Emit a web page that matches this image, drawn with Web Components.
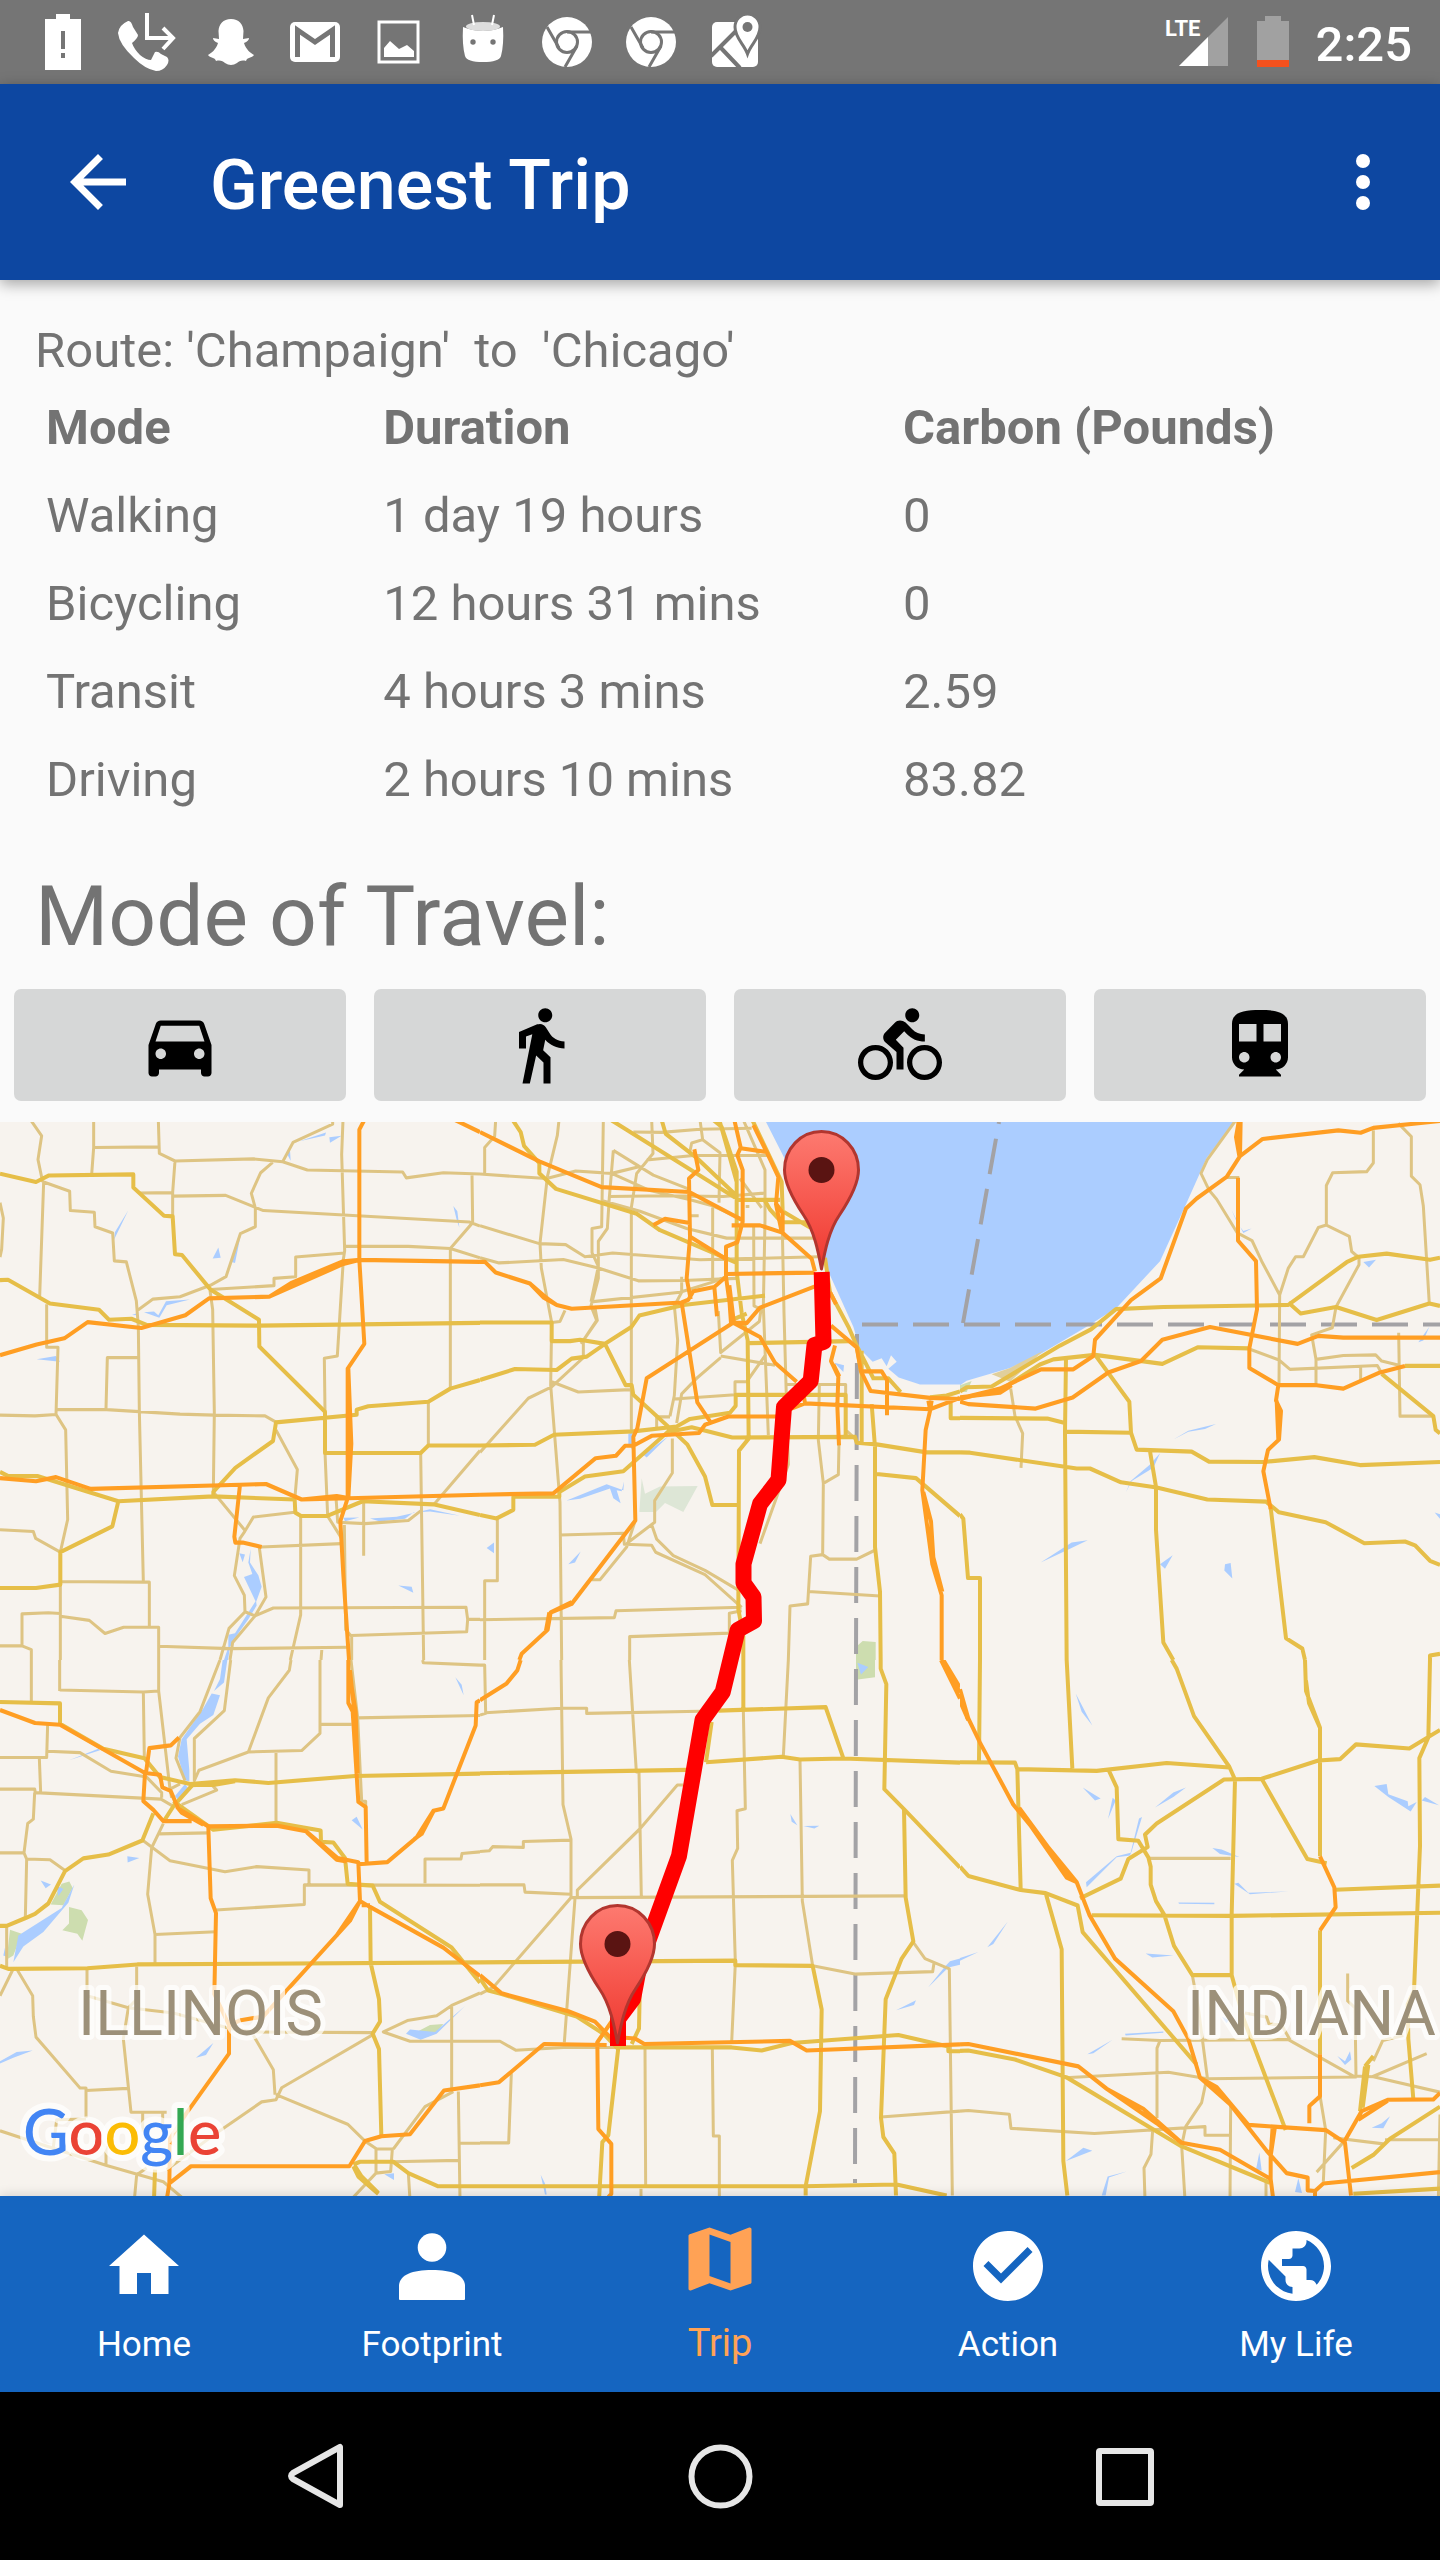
<!DOCTYPE html>
<html lang="en">
<head>
<meta charset="utf-8">
<meta name="viewport" content="width=device-width, initial-scale=1">
<title>Greenest Trip</title>
<style>
  html { background: #000; }
  body { margin: 0; font-family: Roboto, "Noto Sans", sans-serif; background: #fafafa; color: #737373; }
</style>
</head>
<body>
<trip-screen></trip-screen>

<script>
const define = (name, html, setup) => {
  const template = document.createElement('template');
  template.innerHTML = html;
  customElements.define(name, class extends HTMLElement {
    constructor() {
      super();
      this.attachShadow({ mode: 'open' }).append(template.content.cloneNode(true));
      if (setup) setup(this.shadowRoot, this);
    }
  });
};

/* ---------- status bar ---------- */
define('status-bar', `
<style>
  :host { display: flex; align-items: center; justify-content: space-between; height: 84px; background: #757575; color: #fff; }
  .left { display: flex; padding-left: 21px; }
  .right { display: flex; align-items: center; padding-right: 28px; }
  svg { display: block; width: 84px; height: 84px; fill: #fff; }
  .lte { width: 76px; font-weight: 700; font-size: 22px; }
  .batt { width: 80px; }
  .k { fill: #757575; }
  .s { fill: none; stroke: #757575; stroke-width: 3; }
  .w { fill: none; stroke: #fff; stroke-width: 4; }
  time { font-size: 49px; line-height: 58px; font-weight: 500; padding-top: 5px; }
</style>
<div class="left">
  <svg viewBox="0 0 84 84"><path d="M24 19H35V14H49V19H60V70H24Z"/><path class="k" d="M40 31h4v18h-4zM40 53h4v5h-4z"/></svg>
  <svg viewBox="0 0 84 84"><path d="M23 21Q26 20 28 27L33 35Q33 38 27 43Q29 49 35 55Q41 60 46 60L50 52Q53 51 56 54L62 57Q65 60 62 65Q58 71 51 71Q40 69 29 58Q14 44 13 33Q14 25 23 21Z"/><path class="w" d="M42 13V38H68M58 28L68 38L58 49"/></svg>
  <svg viewBox="0 0 84 84"><path d="M42 19C50 19 54 24 54.500 31L54 39L60 38Q60 41 55 43C57 50 62 53 65 55C63 58 58 57 57 61C53 60 50 61 48 63Q42 67 36 63C34 61 31 60 27 61C26 57 21 58 19 55C22 53 27 50 29 43Q24 41 24 38L30 39L29.500 31C30 24 34 19 42 19Z"/></svg>
  <svg viewBox="0 0 84 84"><rect x="17" y="22" width="50" height="40" rx="5"/><path class="s" style="stroke-width:5" d="M24.500 57V30L42 42L59.500 30V57"/></svg>
  <svg viewBox="0 0 84 84"><rect class="w" style="stroke-width:3" x="22" y="22" width="39" height="40"/><path d="M27 57V48L33 41L42 49L50 45L57 51V57Z"/></svg>
  <svg viewBox="0 0 84 84"><path d="M22 27Q42 35 62 27Q63 45 60 56Q58 62 42 62Q26 62 24 56Q21 45 22 27Z"/><ellipse cx="42" cy="26.500" rx="17" ry="4.500" fill="#ddd"/><path class="w" style="stroke-width:2" d="M31 15L33 25M53 15L51 25"/><circle class="k" cx="32" cy="42" r="2.700"/><circle class="k" cx="52" cy="42" r="2.700"/></svg>
  <svg viewBox="0 0 84 84"><circle cx="42" cy="42" r="25"/><path class="s" d="M42 32H67M22 27L34 48M52 46L40 67"/><circle class="s" cx="42" cy="42" r="10.500"/></svg>
  <svg viewBox="0 0 84 84"><circle cx="42" cy="42" r="25"/><path class="s" d="M42 32H67M22 27L34 48M52 46L40 67"/><circle class="s" cx="42" cy="42" r="10.500"/></svg>
  <svg viewBox="0 0 84 84"><rect x="19" y="22" width="46" height="45" rx="5"/><path class="s" style="stroke-width:4" d="M18 56L44 30M28 48L47 68"/><path d="M54.500 54C51 44 42 38 42 27A12.500 13 0 0 1 67 27C67 38 58 44 54.500 54Z" stroke="#757575" stroke-width="3"/><circle class="k" cx="54.500" cy="27" r="5"/></svg>
</div>
<div class="right">
  <svg class="lte" viewBox="0 0 76 84"><path d="M19 66L68 17V66Z" opacity=".32"/><path d="M19 66L48 37V66Z"/><text x="5" y="36">LTE</text></svg>
  <svg class="batt" viewBox="0 0 80 84"><path d="M21 21H29V16H45V21H53V67H21Z" opacity=".32"/><path d="M21 60H53V67H21Z" fill="#f4511e"/></svg>
  <time>2:25</time>
</div>`);

/* ---------- app bar ---------- */
define('app-bar', `
<style>
  :host { display: flex; align-items: center; height: 196px; padding: 0 35px 0 56px; background: #0d47a1; color: #fff; box-shadow: 0 4px 14px rgba(0,0,0,.35); position: relative; z-index: 1; }
  button { border: 0; padding: 0; background: none; color: inherit; display: block; }
  svg { display: block; width: 84px; height: 84px; fill: currentColor; }
  h1 { flex: 1; margin: 0; padding: 6px 0 0 70px; font-size: 70px; line-height: 82px; font-weight: 500; }
</style>
<button aria-label="Back"><svg viewBox="0 0 24 24"><path d="M20 11H7.830l5.590-5.590L12 4l-8 8 8 8 1.410-1.410L7.830 13H20v-2z"/></svg></button>
<h1><slot></slot></h1>
<button aria-label="More options"><svg viewBox="0 0 24 24"><circle cx="12" cy="6" r="2"/><circle cx="12" cy="12" r="2"/><circle cx="12" cy="18" r="2"/></svg></button>`);

/* ---------- route comparison ---------- */
define('route-summary', `
<style>
  :host { display: block; padding: 38px 0 0 35px; font-size: 49px; line-height: 66px; }
  p { margin: 0; white-space: pre; }
  table { width: 100%; table-layout: fixed; border-collapse: collapse; }
  th, td { box-sizing: border-box; padding: 11px 0 11px 11px; text-align: left; }
  th { font-weight: 700; }
  th:nth-child(1) { width: 24%; }
  th:nth-child(2) { width: 37%; }
</style>
<p><slot></slot></p>
<table>
  <thead><tr><th>Mode</th><th>Duration</th><th>Carbon (Pounds)</th></tr></thead>
  <tbody></tbody>
</table>`, root => {
  const rows = [
    ['Walking', '1 day 19 hours', '0'],
    ['Bicycling', '12 hours 31 mins', '0'],
    ['Transit', '4 hours 3 mins', '2.59'],
    ['Driving', '2 hours 10 mins', '83.82'],
  ];
  root.querySelector('tbody').innerHTML = rows
    .map(r => '<tr>' + r.map(c => `<td>${c}</td>`).join('') + '</tr>').join('');
});

/* ---------- travel mode buttons ---------- */
define('travel-modes', `
<style>
  :host { display: block; padding: 37px 14px 21px; }
  h2 { margin: 0 0 16px; padding-left: 21px; font-size: 84px; line-height: 112px; font-weight: 400; }
  div { display: grid; grid-template-columns: repeat(4, 1fr); gap: 28px; }
  button { border: 0; padding: 14px 0; border-radius: 7px; background: #d6d7d7; color: #000; }
  svg { display: block; width: 84px; height: 84px; margin: 0 auto; fill: currentColor; }
</style>
<h2><slot></slot></h2>
<div>
  <button aria-label="Driving"><svg viewBox="0 0 24 24"><path d="M18.920 6.010C18.720 5.420 18.160 5 17.500 5h-11c-.66 0-1.210.42-1.420 1.010L3 12v8c0 .55.45 1 1 1h1c.55 0 1-.45 1-1v-1h12v1c0 .55.45 1 1 1h1c.55 0 1-.45 1-1v-8l-2.080-5.990zM6.500 16c-.83 0-1.500-.67-1.500-1.500S5.670 13 6.500 13s1.500.67 1.500 1.500S7.330 16 6.500 16zm11 0c-.83 0-1.500-.67-1.500-1.500s.67-1.500 1.500-1.500 1.500.67 1.500 1.500-.67 1.500-1.500 1.500zM5 11l1.500-4.500h11L19 11H5z"/></svg></button>
  <button aria-label="Walking"><svg viewBox="0 0 24 24"><path d="M13.500 5.500c1.100 0 2-.9 2-2s-.9-2-2-2-2 .9-2 2 .9 2 2 2zM9.800 8.900L7 23h2.100l1.800-8 2.100 2v6h2v-7.500l-2.100-2 .6-3C14.800 12 16.800 13 19 13v-2c-1.900 0-3.500-1-4.300-2.400l-1-1.600c-.4-.6-1-1-1.700-1-.3 0-.5.1-.8.1L6 8.300V13h2V9.600l1.800-.7"/></svg></button>
  <button aria-label="Bicycling"><svg viewBox="0 0 24 24"><path d="M15.500 5.500c1.100 0 2-.9 2-2s-.9-2-2-2-2 .9-2 2 .9 2 2 2zM5 12c-2.800 0-5 2.200-5 5s2.200 5 5 5 5-2.200 5-5-2.200-5-5-5zm0 8.500c-1.900 0-3.500-1.600-3.500-3.500s1.600-3.500 3.500-3.500 3.500 1.600 3.500 3.500-1.600 3.500-3.500 3.500zm5.800-10l2.400-2.400.8.8c1.300 1.300 3 2.100 5.100 2.100V9c-1.500 0-2.700-.6-3.600-1.500l-1.900-1.900c-.5-.4-1-.6-1.600-.6s-1.100.2-1.400.6L7.800 8.400c-.4.4-.6.9-.6 1.400 0 .6.2 1.100.6 1.400L11 14v5h2v-6.200l-2.200-2.300zM19 12c-2.800 0-5 2.200-5 5s2.200 5 5 5 5-2.200 5-5-2.200-5-5-5zm0 8.500c-1.900 0-3.500-1.600-3.500-3.500s1.600-3.500 3.500-3.500 3.500 1.600 3.500 3.500-1.600 3.500-3.500 3.500z"/></svg></button>
  <button aria-label="Transit"><svg viewBox="0 0 24 24"><path d="M12 2c-4.420 0-8 .5-8 4v9.500C4 17.430 5.570 19 7.500 19L6 20.500v.5h12v-.5L16.500 19c1.930 0 3.500-1.570 3.500-3.500V6c0-3.500-3.580-4-8-4zM7.500 17c-.83 0-1.500-.67-1.500-1.500S6.670 14 7.500 14s1.500.67 1.500 1.500S8.330 17 7.500 17zm3.500-6H6V6h5v5zm5.500 6c-.83 0-1.500-.67-1.500-1.500s.67-1.500 1.500-1.500 1.500.67 1.500 1.500-.67 1.500-1.500 1.500zm1.500-6h-5V6h5v5z"/></svg></button>
</div>`);

/* ---------- map: six tiles, each 480x540 map units, on a 1440x1568 grid ---------- */
const tiles = [
{ x: 0, y: -2,
  water: 'M898 62L978 36L975 45ZM988 50L1025 46L990 66ZM862 100L870 88L872 118ZM385 262L342 348L345 325ZM638 402L655 370L662 400ZM722 335L695 412L705 415ZM1360 250L1372 265L1378 312L1370 290ZM432 558L462 556L475 567L498 526L570 521L500 538L478 574ZM396 566L415 560L412 567ZM110 695L168 685L180 702ZM1030 1155L1078 1154L1035 1165ZM1110 1157L1190 1152L1290 1130L1380 1149L1290 1137L1240 1140L1215 1158L1140 1166ZM718 1258L735 1262L728 1284ZM732 1327L757 1318L745 1285L752 1245L750 1285L775 1322L785 1355L768 1400ZM768 1395L770 1410L745 1450L715 1490L690 1530L684 1568H672L685 1530V1495L705 1490ZM1195 1352L1235 1355L1240 1373Z',
  minor: 'M92 0L125 46L114 115L128 180M281 0V80L275 158M281 80L475 78M475 0L478 97L525 119L760 113L848 121L922 145L1208 151L1219 168L1330 153L1440 157M525 119L518 210V280M418 212L518 211M518 221L677 219L790 263L1408 296L1440 308M818 123L782 153L754 213L766 256V310L721 330L678 455L631 480L540 513L459 520L412 553M848 121L879 65L998 12V0M1029 0L1025 100L1034 380L1030 405L1012 685L973 692L975 845M131 180L209 207L211 263L283 268L285 310L338 328L343 409L379 412L409 525L415 600L418 845L430 1340M131 180L119 512M0 240L10 285L5 375L0 398M140 535V660H174L168 855L197 900L203 1160L181 1255M631 492L822 481V460L887 455V398L1034 386M1034 367H1225L1351 373L1440 400M1416 158L1418 298L1351 373V780M630 495L638 550L643 850L640 1080M318 838L322 690H413M168 841H320L540 854L643 857L795 859L828 877M0 857L105 859L168 855M828 900L892 1015L884 1105M640 1080L735 1192M884 1139L760 1153L734 1195L720 1215L703 1323L733 1380L735 1428M975 965L983 1150L1028 1220M1008 1095L1013 1168L1095 1172L1225 1163L1262 1135M1091 1110V1265M902 1150V1437L871 1568M783 1240L1025 1230M778 1242L798 1385L765 1440M735 1428L687 1476L660 1568M735 1428L765 1440L698 1517L690 1568M765 1440L820 1417L1398 1415L1403 1450H1440M1403 1450L1400 1486L1053 1497M1262 965L1271 1568M1285 820V945M1440 960L1303 1115M477 1528L690 1535L1045 1531M966 1531L963 1568M0 1190L100 1195L107 1215L181 1255M181 1340L430 1342H448V1472M181 1255V1568M181 1441L268 1453L315 1491L371 1473H476V1568M181 1433L145 1431L66 1434V1527M0 1527H66L94 1538V1568M1033 1170L1037 1480L1055 1500V1568',
  major: 'M0 156L108 180L147 161L400 158V196L492 278L518 280L525 390L546 392L631 492L777 580L778 658L975 847V967H1262L1285 945H1440M0 465L24 464L150 533L297 551L327 580L394 577L440 595L775 597L1440 589M1440 755L1351 780L1285 818L1105 831L1070 841V856L828 878L819 932L706 1010L640 1080V1093M0 1022L25 1034H112L355 1107L640 1093L884 1102L886 1140L903 1150H980L1088 1107L1300 1116L1440 1147M355 1107L337 1180L181 1255V1349L108 1359H0',
  highway: 'M0 683L110 652L193 634L263 587L424 604L556 567L627 518L808 513L1030 418L1080 406L1440 412M808 513L876 472L1030 410L1080 406M1093 0L1078 28V406L1093 650L1043 722V1098L1021 1165L1030 1320L1047 1568M1045 722L1054 940L1045 1098M0 1040L108 1049L168 1037L272 1071L720 1059L798 1057L905 1102L1440 1088M905 1102L1010 1092L1045 1098M720 1059L703 1210L706 1227H728L785 1240M1365 0L1440 35' },
{ x: 480, y: -2,
  water: 'M855 0L905 95L960 200L1010 350L1045 440L1120 600L1140 665L1178 702L1205 692L1220 715L1233 683L1250 702L1225 722L1256 748L1320 768H1440V0ZM260 1105L380 1058L430 1075L432 1050L425 1078L410 1075L422 1113L400 1098L390 1070L300 1100ZM445 912L458 905V960L445 940ZM490 972L565 918L500 980ZM20 1243L42 1227V1258ZM265 1290L302 1253L285 1285ZM1063 705L1092 712L1090 732Z',
  park: 'M1128 1530L1148 1513L1187 1516V1568H1128Z',
  pale: 'M485 1040L495 1085L540 1064L653 1063L610 1138L555 1112L528 1138H478Z',
  minor: 'M47 0L44 47L14 80V155M237 0L232 45L202 165L180 358L184 430L215 588L212 770L240 1110L245 1568M370 0L365 310L336 315V385L355 425L333 528M0 157L200 170L287 148L395 155L480 135M400 88L388 225L382 315L355 352V460L333 540L350 582L310 640V690M344 540L352 582L303 650M400 88L520 160L625 200M515 0L519 97L470 155L454 255V905M395 155L510 205L625 230L700 250L790 290M388 222L560 220L730 222L855 212M370 235L480 265L620 315L740 343H1000M0 307L178 359L257 362L315 397L398 386L660 406L1015 397M0 400L57 415L250 405L355 430L475 467L610 466L770 460M333 528L600 500L700 470L740 455M605 455V500L583 540L593 640L583 800L570 860M460 35L545 36L660 27L815 24M500 116L640 103H865M630 90L635 67L668 57L660 0M668 57L720 95L717 240M698 250V470M790 0L855 145V290L850 540L865 915M821 305L822 540L843 550L838 585L722 675L715 555M722 685L885 712M722 690L650 750L605 795L590 880M780 170L845 255M907 320L912 560L918 770L925 1000L840 1230M858 680L800 760H765V800M583 810L765 798M215 760L295 790L450 783M310 690L215 775L145 808L0 965M215 588L240 585L255 553M530 895V862H570M577 925V1025L524 1105V1168L440 1230M240 1205L430 1200L433 1232L515 1235L527 1255L675 1320L785 1415M515 1175L530 1217L580 1265L675 1308L775 1365M465 1165L440 1240L360 1335H335M0 1451L403 1445L408 1425L785 1415M449 1568V1500L748 1490V1432L785 1425M52 1157V1338H14V1568M915 768H1097V900L1125 925M1018 770L1015 930L1030 1055L1028 1262L992 1267L983 1405L930 1411L925 1568M1077 940L1075 1030L1030 1055M1028 1262L1048 1275H1130L1183 1250M985 1369L1200 1382M630 278H656M797 251H808',
  major: 'M98 0L122 35L132 75L178 125V155L228 200L470 272L540 320L770 415M393 0L765 225M545 0L557 40L650 110L770 220M700 0L725 20L770 150V440L785 560L803 640L806 925L777 960L775 1420L790 1500V1568M718 0L770 180M770 232H900M817 0L905 180L908 265L990 312M855 235L870 260L905 297H985M1035 400L1050 500L1105 600L1130 655L1180 750M1130 655L1145 740M0 588H215V642H270L300 638L375 650L455 600L478 568L610 537L855 510M375 650L437 770H455L460 798L570 895L622 942L675 1035L697 1118H775M0 755L105 723L230 726L275 693L320 687L375 650M0 945L165 943L222 914L460 904L590 890L630 868L750 850L767 830V798H1097V920M570 905L635 892L757 922L1125 920L1130 937L1190 942L1340 965H1440M570 900L430 1020L315 1035L238 1080V1094H100V1132L50 1157L0 1147M806 648L1110 642M1145 670V935M1175 825L1185 950V1240L1200 1370L1202 1568M1190 1028L1308 1040L1440 1150M1175 750H1225L1262 790M1440 866H1412V820M1350 805L1400 800L1440 788M750 583L800 562',
  highway: 'M0 35L178 120L365 195L628 209L790 292M755 306H840L907 327L995 403L1005 440M643 85L655 145L627 170L630 340L620 460L632 520M520 305L555 287L630 299M632 340L738 404M763 0L782 80L772 102L788 145V295L772 355L738 368V455L757 590M782 82L860 93L895 165L888 245L905 325M820 15L860 93M890 245L908 270V325M740 447L1005 443M738 455L703 485L640 497L625 522L605 530L275 548L230 537L190 515L150 475L47 443L15 412H0M150 475L200 517L230 537M703 485L711 570M605 530L652 820L690 875M757 590L500 750L472 895L460 920L466 1163L275 1405L212 1430L203 1480L125 1550L118 1568M275 1400L212 1430M208 1430L198 1482M745 480L753 590M748 480L762 590L840 630L885 705L950 760M757 588L800 590L840 545L1005 483M0 1088L220 1084L347 982L408 975L435 946H460L515 917L657 909L675 885L745 861H890M915 845L975 823L1350 840L1440 807M970 790L975 823M1050 500L1068 535M1053 597L1130 660L1143 730L1172 787L1350 807L1440 810M1143 730H1205L1221 755V857M1065 655L1053 700L1075 745L1072 830L1077 945M1060 710L1078 745M1355 815L1350 845L1337 900L1327 1075L1357 1290L1385 1380V1568M1345 815L1350 840M1330 1080L1353 1165L1360 1270L1387 1370' },
{ x: 960, y: -2,
  water: 'M0 0H828L740 110L680 240L600 410L470 545L380 600L240 680L150 720L20 757L0 770ZM815 262L832 300L850 322L875 315L850 328ZM640 928L685 902L768 883L735 897L685 905ZM600 968L580 1010L515 1048L498 1080L512 1048L570 1000ZM242 1285L335 1227L383 1220L330 1245ZM600 1290L638 1264L615 1303ZM795 1290L812 1286L817 1331L793 1308ZM1210 412L1248 406L1227 428ZM1408 600L1375 645L1390 640ZM1424 1140L1440 1145V1158Z',
  park: 'M0 770L35 758L20 790H0Z',
  sand: 'M95 738L150 720L250 670L150 760Z',
  minor: 'M828 0L742 115L723 155L748 205L770 230L832 328L876 350L905 410L959 508L957 770M798 167H838M1315 10L1354 48V163L1380 188L1390 250L1408 535M1240 30V125L1220 150L1118 153L1099 190V305L1075 312L1030 397H1007L985 430L959 508M1099 305L1168 338L1175 382L1197 400V420L1128 543L1117 603L1055 624L1068 695V770M868 665L957 697L990 724L1252 713L1265 735M1068 695L1150 684L1247 682L1265 700L1317 712M1316 618L1320 860H1418M1202 715V755M152 780L165 860L188 910L183 1010',
  major: 'M0 788L20 776L95 774L300 655L393 608L468 549L610 543L985 537L1160 413L1195 397L1280 388L1410 406L1440 400M985 530L1022 562L1128 543L1250 581L1408 533L1440 540M0 808L120 785L240 710L280 695L405 682L607 708L713 660L868 663M405 682L508 818L513 908L530 957L695 963L747 992L910 993L1063 979L1200 1002L1440 993M318 690L315 905L320 1568M315 905L513 908M0 865L262 867L315 880M0 965L30 966L350 1012H390L483 1052L590 1067L742 1102L918 1108L957 1139L1097 1168L1213 1229L1335 1224L1365 1235L1410 1280L1440 1292M570 962L588 1065V1190L610 1517L640 1568M932 1125L978 1505L1027 1535L1035 1568M0 1145L10 1158L24 1330H60V1568M1265 737L1420 860L1427 900L1440 910M1335 714H1440M1440 1550L1410 1555V1568',
  highway: 'M842 0L840 105L908 55L1135 30L1202 37L1240 23L1440 3M837 0L828 50L838 105M835 0L835 90M840 105L800 165L710 228L678 257L602 460L513 523L405 638L400 685L340 724H243L120 780L0 810M834 168V350L888 410L891 550L868 663V720L955 770H1070L1150 780L1260 733L1335 714M0 818L25 825L227 838L338 806L445 733L543 700L607 638L750 601L1013 650L1075 627L1150 632H1440M955 770L948 815L963 845L957 928L924 958L910 1020L932 1130M950 815L955 928M0 805L120 792L155 770M0 808L140 775' },
{ x: 0, y: 538,
  park: 'M152 710L185 650L208 643L218 662L190 712ZM207 717L245 727L264 755L247 815L232 795L187 785L207 765ZM30 783L65 795L40 858L20 870ZM1240 1085L1290 1060L1330 1057L1305 1085L1265 1100Z',
  water: 'M668 0H682L672 65L642 90L660 55ZM635 97L660 102L640 160L600 185L560 230L568 320V352L555 350L534 280L545 230L610 140ZM525 395L555 360L563 370L535 408ZM207 291L295 258L300 262ZM382 570L418 575L383 588ZM1055 465L1070 455L1088 492ZM1366 50L1385 72L1391 102ZM122 640L153 652L137 663ZM40 878L55 800L185 720L223 652L205 705L130 790L70 832ZM170 655L190 665L175 685ZM15 835L20 862L10 858ZM588 1155L640 1112L618 1147ZM0 1165L50 1138L98 1134L40 1155L0 1172ZM1218 1085L1230 1073L1305 1080L1395 1005L1310 1085L1262 1103ZM1153 1493L1182 1490V1510Z',
  minor: 'M94 0V122M179 0V90M179 87L430 93L476 90V0M476 90L510 375L540 360M430 93L433 285M660 0L600 150L540 225L528 285L555 350M692 0L673 147L583 228V350L597 320L745 267L905 263L960 213V0M745 267L805 110L868 30L873 0M960 187H1055M828 265V470M1268 0L1270 8L1440 15M1053 0L1073 168L1440 161M1073 168L1085 410H1097V430M0 283H140L143 185M143 265L240 269L333 323L440 340L485 385V400M118 285L122 385M0 375H104L106 385L483 404L520 425M104 385L100 462L83 475L72 560H0M72 560L80 578L150 580L193 610M80 578L76 750M490 475L455 545L443 680L465 797V882M465 797L648 789M475 505L625 502M430 525L510 583L675 615L770 600L927 610V652M545 420L650 378L635 362L575 365M510 375L515 400M648 726L913 710V653L1440 654M1275 648V578H1383L1386 562L1440 557M20 775V895M38 900L0 975M52 900L98 975L100 1035L108 1095L240 1243H258V1330M261 895V975L385 1010L520 1025L690 1070L760 1080L1120 1082M410 890V985L385 1010L370 1100L393 1313H500M258 1250L383 1244M428 1315V1370M488 1315V1370M760 1090L820 1190L825 1262M1120 1087L845 1242L828 1277L785 1283L640 1380L500 1480M828 1262L1043 1348L1095 1397L1130 1420H1177L1172 1485L1128 1490V1420M1128 1490L1060 1560M1177 1457L1375 1453M1440 967L1355 1003L1310 1033L1222 1047L1150 1080L1230 1107H1440M1355 1003V1245M1375 1253L1380 1568M1375 1403H1440M1360 1253L1275 1297L1180 1420M1225 1490L1230 1568M0 1367L150 1415L320 1468L490 1515L555 1568M318 1468V1415L300 1395M160 1415L170 1335L258 1333M410 1495L403 1568M410 1495L440 1475',
  major: 'M0 122L180 126V185L310 258L433 285L480 340L570 360L705 349L805 357L1065 337L1440 330M570 363H640L705 352M0 772H20L75 750L105 737L145 707L195 613L250 576L325 565L427 524L460 445M490 470L520 425L580 360M520 410L640 493L830 473L962 495L963 528L1000 530L1035 575L1043 650L1118 655L1140 702L1355 835L1440 937M0 888L25 897L262 895L412 884L1440 878M1110 715L1112 880L1137 985L1140 1050L1118 1085L1137 1130L1144 1380M465 1480L462 1568M1060 1465L1080 1457H1180L1225 1490L1313 1528H1440M1060 1470L1075 1500L1135 1550M1065 1470L1085 1500L1135 1548',
  highway: 'M0 145L105 183L180 188L435 328L480 333L487 370L512 380L535 432L625 483L830 481L918 497L1013 575L1075 587L1080 700L1110 717L1330 835L1440 918M1045 0V125L1058 150L1075 412L1097 427L1100 592M1047 30L1067 150L1073 330M1050 30L1063 150M1075 593L1162 587L1250 515L1300 438L1330 431L1427 190L1430 123L1440 117M435 328L430 410L460 435L490 468H575M438 328L448 256L512 248L537 225M625 485L632 692L648 735L643 970L687 1060V1143L560 1315L510 1390L508 1520L500 1568M1080 700L1050 757L850 970L790 1035L718 1047L690 1060M508 1520L573 1470H1048L1095 1397L1144 1383L1230 1377L1332 1250L1440 1235M530 425L545 443L610 478M920 500L1010 580L1040 585M1080 700L1010 800M1243 520L1265 505L1300 440M1085 712H1110' },
{ x: 480, y: 538,
  park: 'M1128 0H1185V50L1128 57Z',
  water: 'M931 447L952 480L935 470ZM970 482L1018 481L1003 489ZM1344 951L1395 890L1410 875L1440 867V885L1405 893ZM1248 1017L1308 988L1302 1002ZM182 1495L195 1520L200 1552H195ZM1132 8L1165 20L1143 42Z',
  minor: 'M0 15H14L17 155L0 160M17 153L243 140H320V155L660 149M243 0L249 420L273 520V690L40 950L0 970M448 0L469 325H477L484 690M925 0L910 280M790 145L796 432L771 438L773 547L757 582L766 880L755 1110M610 363H592L480 490L292 668V690M0 556L28 554L38 542L130 544V527L273 523M0 653H132L135 674L273 680M273 690L1277 685M285 692L253 1110M960 290L967 700L998 888L1125 912L1358 905L1362 880M1300 820L1335 867L1408 897L1417 1555M0 1107H60L107 1133L250 1125H480M94 1200L86 1402H0M495 1128L497 1525M483 1535V1568M697 1128L700 1382H718V1568M1203 1327L1440 1310',
  major: 'M0 329L620 319M678 297L905 281L960 289L1090 286L1440 298M678 297L695 180M715 147L1037 137L1090 285M790 0V145M1202 0V25L1219 70L1213 375L1272 433L1440 603M1272 433L1277 690L1300 817L1265 867L1217 985L1203 1330L1210 1385L1243 1433L1248 1555M0 878L766 873V886L998 888L1025 1015L1020 1310L977 1528V1555M0 925L25 960L65 970L290 1035L370 1085L410 1125L755 1125L845 1134L935 1112L1255 1089L1405 1122V1136H1440M480 920L477 1070L455 1115M415 1125L385 1380L367 1400L357 1568M0 1528H970L1250 1523L1400 1555',
  highway: 'M0 117L80 68L112 30L122 0M0 915L65 968L265 1020L345 1050L395 1100M405 1035L352 1110L355 1362L394 1405V1550L385 1560M0 1235L57 1226L192 1115L380 1118M435 1097L465 1099L493 1115L930 1106L980 1134L1440 1116M1383 0L1440 112M1387 0L1440 95M1390 0L1440 80' },
{ x: 960, y: 538,
  water: 'M347 97L362 125L397 190L365 150ZM368 370L422 402L405 408ZM458 400L467 408L444 462ZM585 428L640 385L678 370L640 398ZM537 460L546 456L515 555L510 568L470 573L380 660L378 645L470 570L512 560ZM757 546L785 550L838 572L780 563ZM823 650L835 647L865 676L985 672L870 680ZM655 704L763 705V709L657 708ZM1243 366L1280 360L1285 390L1343 410L1345 425L1370 412L1352 440L1285 398ZM1385 408L1395 398L1437 422ZM143 760L100 825L82 834ZM0 865L55 848L0 873ZM557 852L640 858L577 864ZM495 1085L610 1079V1082L497 1090ZM382 1145L458 1103L400 1142ZM1132 1150L1155 1165L1170 1136L1174 1160L1155 1176ZM318 1455L370 1416L397 1425ZM1235 1358L1265 1345L1290 1325L1270 1360ZM1005 1545L1015 1505L1026 1548ZM888 1480L898 1430L905 1482ZM425 1555L443 1500L500 1485L447 1503L437 1555ZM785 1035L805 1045L800 1055Z',
  minor: 'M565 576H812M485 1100L600 1105L985 1102L1180 1208L1240 1210L1440 1255M600 1105L591 1127V1330M697 915L715 1010L742 1213M315 1213L625 1197L742 1216L1190 1211M738 1225L725 1285L677 1355L665 1410L675 1568M0 1310L25 1308L148 1319L153 1360L403 1375L735 1355V1380H812M812 1290L810 1568M578 1365L573 1435L552 1475L555 1568M855 1025L920 1037L927 1057L965 1060L990 1103M1163 910V990L1185 1010L1188 1208M1237 1210L1400 1143M1240 1165L1268 1105L1330 1090M1080 1265L1097 1365L1090 1515M1070 1487L1155 1395M1120 1387L1270 1405M1275 1393H1440M1440 1320L1435 1568M918 1515V1568',
  major: 'M60 0L57 295M0 297L165 298L172 317L410 322L620 299L808 312M320 0L337 315M172 317L182 665M635 0L650 25L702 163L808 310L825 347L815 740V915H697L642 830L613 740L588 700L572 652V600L565 573L535 525L475 520L470 370L447 322M360 692L482 635L505 578L563 543L555 507L590 475L792 347L905 345L1075 292L1140 288L1188 245L1348 257L1440 203M905 345L1042 578L1100 590M1035 0L1038 90L1080 197V570M1038 60L1047 125L1080 197M1410 0L1405 225L1378 285L1380 540L1362 960L1343 1000L1345 1100L1360 1275M1125 667L1440 655M395 741L815 743L1440 734M0 600L25 627L182 668L257 677L353 713L368 790L710 1175M257 677L305 840L310 1455L322 1555M815 915L850 1040L977 1365M1080 785V1145M0 1135L25 1134L165 1160L320 1212L660 1410L930 1518M1215 1180L1240 1150M1215 1180L1200 1310M1225 1175L1208 1300M1440 1297L1290 1390L1240 1437L1175 1475M1180 1550L1440 1535',
  highway: 'M0 85L25 170L60 240L160 420L350 645L388 740L465 867L640 1020L685 1100L720 1213L770 1240L865 1350L1097 1365L1155 1402L1173 1555M0 120L25 175M0 100L22 170M175 430L320 632L350 645M178 430L330 630M720 1213L810 1290L920 1425L980 1490L1043 1503V1540L1065 1542L1090 1520L1440 1487M1065 1540V1568M0 1116L25 1115L355 1180L440 1245L550 1303L665 1402L780 1422L932 1507L940 1568M932 1507V1440L938 1355M945 1355L932 1440M440 1245L590 1345L665 1402M1080 570L1123 660L1127 718L1080 785M1080 1145V1267L1048 1295V1345M1155 1395L1205 1310L1283 1277L1420 1276L1440 1257M1195 1335L1283 1280' },
];

define('trip-map', `
<style>
  :host { display: block; background: #f7f3ee; }
  svg { display: block; width: 100%; height: auto; }
  svg svg { width: 480px; height: 540px; }
  .water { fill: #abcdff; }
  .park { fill: #cdddaf; }
  .pale { fill: #dde6d6; }
  .sand { fill: #e0cf9c; }
  .minor, .major, .highway, .border, .route { fill: none; stroke-linejoin: round; }
  .minor { stroke: #dec483; stroke-width: 9; }
  .major { stroke: #e6be48; stroke-width: 12; }
  .highway { stroke: #ff9e23; stroke-width: 12; }
  .border { stroke: #a3a2a5; stroke-width: 4; stroke-dasharray: 36 15; }
  .route { stroke: #f00; stroke-width: 16; }
  .state { font-size: 63px; fill: #9c9079; stroke: #fff; stroke-opacity: .72; stroke-width: 10; stroke-linejoin: round; paint-order: stroke; }
  .logo { font: 500 63px Lato, "Open Sans", sans-serif; stroke: #fff; stroke-opacity: .72; stroke-width: 12; stroke-linejoin: round; paint-order: stroke; }
</style>
<svg viewBox="0 0 1440 1074" role="img" aria-label="Map of the route from Champaign to Chicago">
  <defs>
    <linearGradient id="pin" x1="0" y1="0" x2="0" y2="1"><stop offset="0" stop-color="#fd7a70"/><stop offset="1" stop-color="#f0382f"/></linearGradient>
  </defs>
  <g id="ground"></g>
  <path class="border" d="M862 202.500H1440"/>
  <path class="border" stroke-dashoffset="22" d="M857 212L856 538L855 1061"/>
  <path class="border" stroke-dashoffset="34" d="M999 0L963 201"/>
  <g id="roads"></g>
  <path class="route" d="M821.700 150L823.500 220L814.500 223L810.700 259L784 285L778.500 358L760 382L743.500 442V461L753.500 475L754 499L737.700 508L722.700 570L702.500 598L679 734L639.500 843L633 877L618 897V924"/>
  <g id="pins"></g>
  <text class="state" x="78" y="913">ILLINOIS</text>
  <text class="state" x="1187" y="913">INDIANA</text>
  <text class="logo" x="23" y="1033"><tspan fill="#4285f4">G</tspan><tspan fill="#ea4335">o</tspan><tspan fill="#fbbc05">o</tspan><tspan fill="#4285f4">g</tspan><tspan fill="#34a853">l</tspan><tspan fill="#ea4335">e</tspan></text>
</svg>`, root => {
  const layer = kinds => tiles.map(t =>
    `<svg x="${t.x}" y="${t.y}" width="480" height="540" viewBox="0 0 1440 1568" preserveAspectRatio="none">` +
    kinds.filter(k => t[k]).map(k => `<path class="${k}" d="${t[k]}"/>`).join('') + '</svg>').join('');
  root.querySelector('#ground').innerHTML = layer(['park', 'pale', 'water', 'sand']);
  root.querySelector('#roads').innerHTML = layer(['minor', 'major', 'highway']);
  root.querySelector('#pins').innerHTML = [[821.5, 48], [617.5, 822]].map(([x, y]) =>
    `<g transform="translate(${x} ${y})"><path fill="url(#pin)" stroke="#b2362f" stroke-width="3" stroke-linejoin="round" d="M0 -38.500C21 -38.500 37 -21 37 0C37 14 28 30 18 45C7 61 3 83 0 99C-3 83 -7 61 -18 45C-28 30 -37 14 -37 0C-37 -21 -21 -38.500 0 -38.500Z"/><circle r="13" fill="#5a1412"/></g>`).join('');
});

/* ---------- bottom navigation ---------- */
define('nav-item', `
<style>
  :host { display: block; flex: 1; color: #fff; }
  a { display: flex; flex-direction: column; align-items: center; gap: 16px; padding-top: 28px; color: inherit; text-decoration: none; font-size: 35px; line-height: 42px; }
  ::slotted(svg) { display: block; width: 84px; height: 84px; fill: currentColor; }
  :host([active]) { color: #ffa255; }
  :host([active]) a { padding-top: 21px; gap: 21px; font-size: 38px; }
</style>
<a href="#"><slot name="icon"></slot><slot></slot></a>`);

define('bottom-nav', `
<style>
  :host { display: flex; height: 196px; background: #1565c0; position: relative; box-shadow: 0 -2px 10px rgba(0,0,0,.12); }
</style>
<nav-item><svg slot="icon" viewBox="0 0 24 24"><path d="M10 20v-6h4v6h5v-8h3L12 3 2 12h3v8z"/></svg>Home</nav-item>
<nav-item><svg slot="icon" viewBox="0 0 84 84"><circle cx="42" cy="23.500" r="14.300"/><path d="M9 75V61C10 51 22 46 42 46S74 51 75 61V75Q75 76 74 76H10Q9 76 9 75Z"/></svg>Footprint</nav-item>
<nav-item active><svg slot="icon" viewBox="0 0 24 24"><path d="M20.500 3l-.16.03L15 5.100 9 3 3.360 4.900c-.21.07-.36.25-.36.48V20.500c0 .28.22.5.5.5l.16-.03L9 18.900l6 2.100 5.640-1.900c.21-.07.36-.25.36-.48V3.500c0-.28-.22-.5-.5-.5zM15 19l-6-2.110V5l6 2.110V19z"/></svg>Trip</nav-item>
<nav-item><svg slot="icon" viewBox="0 0 24 24"><path d="M12 2C6.480 2 2 6.480 2 12s4.480 10 10 10 10-4.480 10-10S17.520 2 12 2zm-2 15l-5-5 1.410-1.410L10 14.170l7.590-7.590L19 8l-9 9z"/></svg>Action</nav-item>
<nav-item><svg slot="icon" viewBox="0 0 24 24"><path d="M12 2C6.480 2 2 6.480 2 12s4.480 10 10 10 10-4.480 10-10S17.520 2 12 2zm-1 17.930c-3.950-.49-7-3.850-7-7.930 0-.62.08-1.210.21-1.790L9 15v1c0 1.100.9 2 2 2v1.930zm6.900-2.540c-.26-.81-1-1.390-1.900-1.390h-1v-3c0-.55-.45-1-1-1H8v-2h2c.55 0 1-.45 1-1V7h2c1.100 0 2-.9 2-2v-.41c2.930 1.190 5 4.060 5 7.410 0 2.080-.8 3.970-2.100 5.390z"/></svg>My Life</nav-item>`);

/* ---------- system navigation ---------- */
define('system-nav', `
<style>
  :host { display: flex; height: 168px; padding: 0 114px; background: #000; }
  button { flex: 1; border: 0; padding: 0; background: none; }
  svg { display: block; width: 84px; height: 84px; margin: 0 auto; fill: none; stroke: #e6e6e6; stroke-width: 6; stroke-linejoin: round; }
</style>
<button aria-label="Back"><svg viewBox="0 0 84 84"><path d="M66 13V71L19 45Q15 42 19 39Z"/></svg></button>
<button aria-label="Home"><svg viewBox="0 0 84 84"><circle cx="42.500" cy="42.500" r="29"/></svg></button>
<button aria-label="Recent apps"><svg viewBox="0 0 84 84"><rect x="17" y="17" width="52" height="52" rx="1"/></svg></button>`);

define('trip-screen', `
<style>:host { display: block; }</style>
<status-bar></status-bar>
<app-bar>Greenest Trip</app-bar>
<main>
  <route-summary>Route: 'Champaign'&nbsp; to &nbsp;'Chicago'</route-summary>
  <travel-modes>Mode of Travel:</travel-modes>
  <trip-map></trip-map>
</main>
<bottom-nav></bottom-nav>
<system-nav></system-nav>`);
</script>
</body>
</html>
